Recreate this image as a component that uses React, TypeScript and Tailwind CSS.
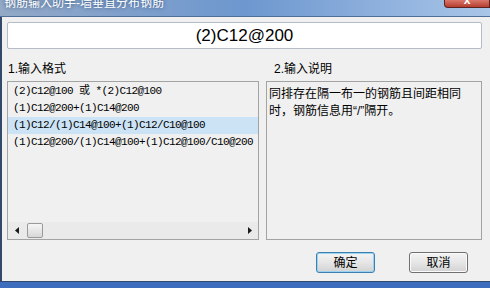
import React from "react";

const FORMATS = [
  "(2)C12@100 或 *(2)C12@100",
  "(1)C12@200+(1)C14@200",
  "(1)C12/(1)C14@100+(1)C12/C10@100",
  "(1)C12@200/(1)C14@100+(1)C12@100/C10@200",
];

const UI_FONT = { fontFamily: "'Liberation Sans', 'Noto Sans CJK SC', sans-serif" };
const MONO_FONT = { fontFamily: "'Liberation Mono', 'Noto Sans CJK SC', monospace" };

function Arrow({ dir }: { dir: "left" | "right" }) {
  return (
    <svg width="4" height="7" viewBox="0 0 4 7" aria-hidden="true">
      {dir === "left" ? <path d="M4 0 L0 3.5 L4 7 Z" fill="#1a1a1a" /> : <path d="M0 0 L4 3.5 L0 7 Z" fill="#1a1a1a" />}
    </svg>
  );
}

function Button({ label, focused }: { label: string; focused?: boolean }) {
  return (
    <button
      className={
        "w-[59px] h-[21px] rounded-[3px] text-[12px] text-black leading-none bg-gradient-to-b from-[#f4f4f4] via-[#e6e6e6] to-[#d2d2d2] " +
        (focused
          ? "border border-[#3c7fb1] shadow-[inset_0_0_0_1px_#9ad2f0]"
          : "border border-[#707070] shadow-[inset_0_0_0_1px_#fbfbfb]")
      }
      style={UI_FONT}
    >
      {label}
    </button>
  );
}

export default function App() {
  return (
    <div className="w-[490px] h-[288px] overflow-hidden flex flex-col bg-[#3e6dbd]" style={UI_FONT}>
      {/* Title bar */}
      <div className="h-[17px] shrink-0 flex items-start border-b border-[#4f6f98] bg-gradient-to-r from-[#93a9c6] via-[#6d97cf] to-[#a9c5e8]">
        <span className="-mt-[5px] pl-[4px] text-[12px] leading-[16px] text-white [text-shadow:0_0_4px_#2b4b78]">
          钢筋输入助手-墙垂直分布钢筋
        </span>
        <div className="ml-auto h-[8px] w-[46px] rounded-bl-[4px] border border-t-0 border-[#5b2420] bg-gradient-to-b from-[#d9776b] to-[#b63c2e] flex items-start justify-center overflow-hidden">
          <span className="-mt-[6px] text-[12px] leading-[12px] font-bold text-white">x</span>
        </div>
      </div>

      {/* Dialog body */}
      <div className="h-[265px] shrink-0 flex flex-col bg-[#f0f0f0] border-l-2 border-b border-[#33496a] pl-[5px] pr-[8px] pt-[5px]">
        <div className="h-[27px] bg-white border border-[#b5bcc6] rounded-[2px] flex items-center justify-center text-[17px] text-black">
          (2)C12@200
        </div>

        <div className="mt-[13px] h-[14px] flex text-[12px] leading-[14px] text-black">
          <div className="w-[252px] pl-[1px]">1.输入格式</div>
          <div className="ml-[7px] pl-[8px]">2.输入说明</div>
        </div>

        <div className="mt-[5px] h-[159px] flex gap-[7px]">
          {/* Format list */}
          <div className="w-[252px] flex flex-col border border-[#a3a3a3]">
            <div className="flex-1 pt-[1px]">
              {FORMATS.map((f, i) => (
                <div
                  key={f}
                  className={
                    "h-[17px] leading-[17px] pl-[5px] text-[11px] tracking-[-0.6px] text-black whitespace-nowrap " +
                    (i === 2 ? "bg-[#cce3f6]" : "")
                  }
                  style={MONO_FONT}
                >
                  {f}
                </div>
              ))}
            </div>
            <div className="h-[17px] flex items-center bg-[#eaeaea]">
              <div className="w-[17px] flex justify-center">
                <Arrow dir="left" />
              </div>
              <div className="ml-[2px] w-[16px] h-[15px] rounded-[2px] border border-[#9a9a9a] bg-gradient-to-b from-[#f6f6f6] to-[#d8d8d8]" />
              <div className="ml-auto w-[17px] flex justify-center">
                <Arrow dir="right" />
              </div>
            </div>
          </div>

          {/* Description */}
          <div className="flex-1 border border-[#a3a3a3] pl-[2px] pt-[4px] text-[12px] leading-[17px] text-black">
            同排存在隔一布一的钢筋且间距相同
            <br />
            时，钢筋信息用“/”隔开。
          </div>
        </div>

        <div className="mt-[12px] flex justify-end gap-[34px] pr-[14px]">
          <Button label="确定" focused />
          <Button label="取消" />
        </div>
      </div>
    </div>
  );
}
